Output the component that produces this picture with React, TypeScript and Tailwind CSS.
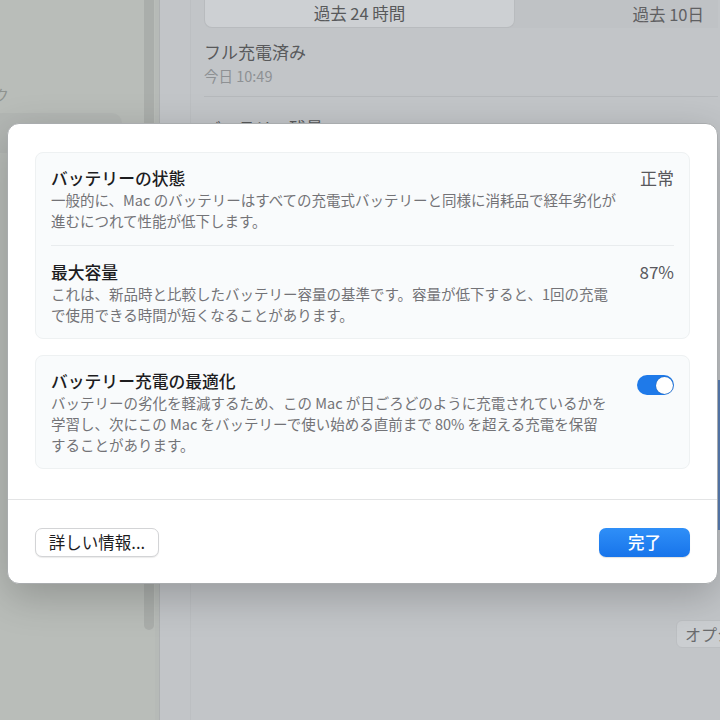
import React from "react";

function Toggle() {
  return (
    <div className="w-[37px] h-[20px] rounded-full bg-[#1f7ae9] flex items-center justify-end px-[1.5px]">
      <div className="w-[17px] h-[17px] rounded-full bg-white shadow-[0_0_1px_rgba(0,0,0,0.45)]" />
    </div>
  );
}

function Row({
  title,
  value,
  lines,
  right,
}: {
  title: string;
  value?: string;
  lines: string[];
  right?: React.ReactNode;
}) {
  return (
    <div className="flex justify-between">
      <div className="flex flex-col">
        <div className="text-[16.8px] leading-[22px] font-medium text-[#1d1d1f]">{title}</div>
        <div className="text-[14.5px] leading-[21px] text-[#737377]">
          {lines.map((l) => (
            <div key={l}>{l}</div>
          ))}
        </div>
      </div>
      {value && <div className="text-[17px] leading-[22px] text-[#58585c]">{value}</div>}
      {right}
    </div>
  );
}

export default function App() {
  return (
    <div className="relative w-[720px] h-[720px] overflow-hidden flex bg-[#c3c6c9] font-['Noto_Sans_CJK_JP','Noto_Sans',sans-serif]">
      {/* sidebar */}
      <div className="w-[143px] bg-[#b9bdb9] flex flex-col pt-[84px]">
        <div className="text-[15px] text-[#8f938f] -ml-[6px]">ク</div>
        <div className="mt-[6px] h-[40px] w-[122px] rounded-r-[10px] bg-[#b3b7b4]" />
      </div>
      <div className="w-[12px] bg-[#b9bdb9] flex justify-center">
        <div className="w-[10px] h-[630px] rounded-b-[5px] bg-[#aaaeab]" />
      </div>
      <div className="w-[5px] bg-[#b6bab7] border-r border-[#adb0b1]" />

      {/* main */}
      <div className="flex-1 flex pl-[30px] bg-[#c2c5c8]">
        <div className="flex-1 flex flex-col border-l border-[#bcbfc2] pl-[13px]">
          <div className="flex h-[28px] bg-[#bfc2c5] rounded-bl-[8px]">
            <div className="w-[311px] rounded-b-[8px] bg-[#cdd0d3] border border-t-0 border-[#b8bbbe] flex items-center justify-center text-[16.5px] text-[#58595b]">
              過去 24 時間
            </div>
            <div className="flex-1 flex items-center justify-end pr-[14px] text-[16.5px] text-[#5f6062]">
              過去 10日
            </div>
          </div>
          <div className="mt-[13px] text-[17px] leading-[22px] text-[#58595b]">フル充電済み</div>
          <div className="mt-[4px] text-[14.5px] leading-[18px] text-[#8e9194]">今日 10:49</div>
          <div className="mt-[11px] h-px bg-[#b6b9bc]" />
          <div className="mt-[18px] text-[17px] text-[#58595b]">バッテリー残量</div>
          <div className="flex-1" />
          <div className="flex justify-end mb-[72px]">
            <div className="h-[28px] px-[8px] rounded-l-[6px] bg-[#cbced1] border border-[#bcbfc2] flex items-center text-[16px] text-[#6a6b6d] whitespace-nowrap -mr-[72px]">
              オプション…
            </div>
          </div>
        </div>
        <div className="w-[2px] flex flex-col pt-[380px]">
          <div className="h-[150px] bg-[#5a7fb6]" />
        </div>
      </div>

      {/* sheet */}
      <div className="absolute left-[7px] top-[123px] w-[711px] h-[461px] bg-white rounded-[12px] border border-[#a9acae] shadow-[0_12px_40px_rgba(0,0,0,0.22)] flex flex-col">
        <div className="flex flex-col gap-[16px] px-[27px] pt-[28px]">
          <div className="rounded-[8px] bg-[#f9fbfc] border border-[#eef1f2] px-[15px] pt-[14px] pb-[13px] flex flex-col">
            <Row
              title="バッテリーの状態"
              value="正常"
              lines={[
                "一般的に、Mac のバッテリーはすべての充電式バッテリーと同様に消耗品で経年劣化が",
                "進むにつれて性能が低下します。",
              ]}
            />
            <div className="mt-[14px] mb-[15px] h-px bg-[#e9ecee]" />
            <Row
              title="最大容量"
              value="87%"
              lines={[
                "これは、新品時と比較したバッテリー容量の基準です。容量が低下すると、1回の充電",
                "で使用できる時間が短くなることがあります。",
              ]}
            />
          </div>
          <div className="rounded-[8px] bg-[#f9fbfc] border border-[#eef1f2] px-[15px] pt-[14px] pb-[13px]">
            <Row
              title="バッテリー充電の最適化"
              lines={[
                "バッテリーの劣化を軽減するため、この Mac が日ごろどのように充電されているかを",
                "学習し、次にこの Mac をバッテリーで使い始める直前まで 80% を超える充電を保留",
                "することがあります。",
              ]}
              right={
                <div className="pt-[5px]">
                  <Toggle />
                </div>
              }
            />
          </div>
        </div>
        <div className="mt-[30px] h-px bg-[#e3e4e5]" />
        <div className="flex items-center justify-between px-[27px] pt-[28px]">
          <button className="h-[29px] w-[124px] rounded-[7px] bg-white border border-[#d3d4d6] shadow-[0_1px_1px_rgba(0,0,0,0.08)] text-[16.5px] text-[#1d1d1f]">
            詳しい情報...
          </button>
          <button className="h-[29px] w-[91px] rounded-[7px] bg-gradient-to-b from-[#2f8ff8] to-[#1774ea] text-[16.5px] font-medium text-white shadow-[0_1px_1px_rgba(0,0,0,0.12)]">
            完了
          </button>
        </div>
      </div>
    </div>
  );
}
